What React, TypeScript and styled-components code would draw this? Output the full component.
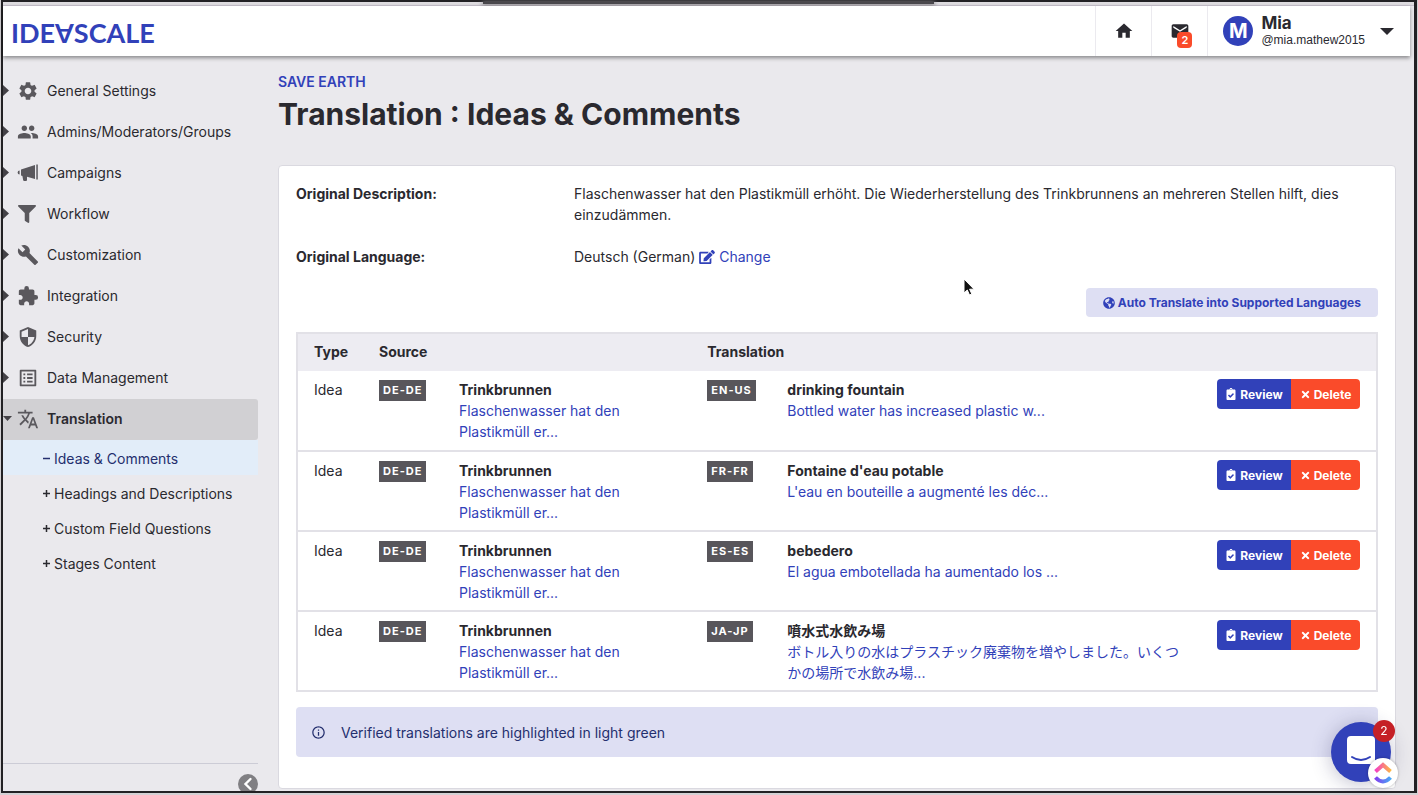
import React from "react";
import styled, { createGlobalStyle, css } from "styled-components";
import {
  MdSettings,
  MdPeople,
  MdBuild,
  MdExtension,
  MdSecurity,
  MdOutlineListAlt,
  MdTranslate,
  MdHome,
  MdEmail,
  MdInfoOutline,
} from "react-icons/md";
import {
  FaFilter,
  FaEdit,
  FaGlobeAmericas,
  FaClipboardCheck,
  FaTimes,
} from "react-icons/fa";

const blue = "#3141b9";
const ink = "#2a292f";
const line = "#e2e1e7";

const GlobalStyle = createGlobalStyle`
  * { box-sizing: border-box; }
  body {
    margin: 0;
    background: #d3d1d4;
    color: ${ink};
    font: 14px/21px Inter, "Noto Sans CJK JP", sans-serif;
  }
  button { font-family: inherit; cursor: pointer; }
  a { text-decoration: none; }
`;

const Frame = styled.div`
  display: flex;
  flex-direction: column;
  min-height: calc(100vh - 3px);
  margin: 0 1px 3px;
  border: 2px solid #222124;
  border-right-width: 3px;
  background: #eae9ed;
`;

const TopEdge = styled.div`
  height: 4px;
  background: #dedce0;
  border-bottom: 1px solid #c9c3ce;
`;

const TopShadow = styled.div`
  width: 32%;
  height: 2px;
  margin-left: 34%;
  background: #4a484d;
  box-shadow: 0 1px 4px 1px #8d8b90;
`;

const Header = styled.header`
  display: flex;
  align-items: center;
  height: 50px;
  margin-right: 4px;
  background: #fff;
  box-shadow: 0 2px 4px rgba(0, 0, 0, 0.42);
  z-index: 1;
`;

const Logo = styled.a`
  margin-right: auto;
  padding: 3px 0 0 8px;
  color: ${blue};
  font: 700 27px/47px Lato, sans-serif;
`;

const FlippedLetter = styled.span`
  display: inline-block;
  padding-bottom: 1px;
  line-height: 20px;
  transform: rotate(180deg);
`;

const HeaderButton = styled.button`
  position: relative;
  display: grid;
  place-items: center;
  width: 56px;
  height: 50px;
  padding: 0;
  border: 0;
  border-left: 1px solid #ebeaef;
  background: none;
  color: ${ink};
`;

const MailCount = styled.span`
  position: absolute;
  top: 26px;
  left: 25px;
  width: 15px;
  height: 16px;
  border-radius: 4px;
  background: #fa4b2a;
  color: #fff;
  font: 600 11px/17px Inter, sans-serif;
  text-align: center;
`;

const Profile = styled.button`
  display: flex;
  align-items: center;
  gap: 8px;
  height: 50px;
  padding: 0 16px 0 15px;
  border: 0;
  border-left: 1px solid #ebeaef;
  background: none;
  color: ${ink};
  text-align: left;
`;

const Avatar = styled.span`
  width: 30px;
  height: 30px;
  border-radius: 50%;
  background: ${blue};
  color: #fff;
  font: 700 20px/30px Inter, sans-serif;
  text-align: center;
`;

const UserName = styled.strong`
  display: block;
  font: 700 17px/19px Inter, sans-serif;
`;

const UserHandle = styled.span`
  display: block;
  font: 12px/15px "Liberation Sans", sans-serif;
`;

const Caret = styled.svg`
  width: 14px;
  height: 7px;
  margin-left: 7px;
`;

const Body = styled.div`
  display: flex;
  flex: 1;
`;

const Sidebar = styled.nav`
  display: flex;
  flex-direction: column;
  flex: none;
  width: 255px;
  padding-top: 15px;
`;

const NavList = styled.ul`
  margin: 0;
  padding: 0;
  list-style: none;
`;

const NavLink = styled.a<{ $open?: boolean }>`
  display: flex;
  align-items: center;
  height: 41px;
  padding-bottom: 2px;
  border-radius: 0 3px 3px 0;
  color: ${ink};
  font-size: 14px;
  ${(p) =>
    p.$open &&
    css`
      background: #d1d0d3;
      font-weight: 600;
    `}
`;

const Arrow = styled.svg`
  flex: none;
  width: 10px;
  height: 12px;
  margin-right: 4px;
  color: #444247;
`;

const NavIcon = styled.span`
  display: grid;
  place-items: center;
  width: 20px;
  margin-right: 10px;
  color: #5a585d;
  font-size: 22px;
`;

const SubLink = styled.a<{ $current?: boolean }>`
  display: flex;
  align-items: center;
  gap: 3px;
  height: 35px;
  padding: 2px 0 0 39px;
  color: ${(p) => (p.$current ? "#242f6e" : ink)};
  background: ${(p) => (p.$current ? "#e2edf9" : "none")};
`;

const SidebarFoot = styled.div`
  display: flex;
  justify-content: flex-end;
  height: 28px;
  margin-top: auto;
  padding-top: 10px;
  border-top: 1px solid #ccccd6;
  overflow: hidden;
`;

const Collapse = styled.button`
  width: 20px;
  height: 20px;
  padding: 0;
  border: 0;
  border-radius: 50%;
  background: #807f83;
  color: #fff;
`;

const Main = styled.main`
  flex: 1;
  min-width: 0;
  padding: 15px 18px 2px 20px;
`;

const Community = styled.a`
  display: block;
  color: ${blue};
  font-size: 14px;
  font-weight: 600;
`;

const Title = styled.h1`
  margin: 3px 0 32px;
  font: 700 30px/38px Inter, sans-serif;
`;

const Card = styled.section`
  padding: 17px 17px 31px;
  border: 1px solid #dad9e0;
  border-radius: 4px;
  background: #fff;
`;

const Details = styled.dl`
  display: grid;
  grid-template-columns: 278px 1fr;
  row-gap: 21px;
  margin: 0;
`;

const Term = styled.dt`
  font-weight: 700;
`;

const Detail = styled.dd`
  margin: 0;
`;

const ChangeLink = styled.a`
  color: ${blue};
  svg { width: 16px; height: 14px; margin-right: 4px; vertical-align: -2px; }
`;

const Toolbar = styled.div`
  display: flex;
  justify-content: flex-end;
  margin: 21px 0 15px;
`;

const AutoButton = styled.button`
  display: flex;
  align-items: center;
  gap: 3px;
  height: 29px;
  padding: 0 17px;
  border: 0;
  border-radius: 4px;
  background: #dedff3;
  color: ${blue};
  font-size: 12px;
  font-weight: 700;
`;

const Table = styled.table`
  width: 100%;
  table-layout: fixed;
  border-collapse: collapse;
  border: 2px solid ${line};
`;

const Head = styled.th`
  height: 38px;
  padding: 0 16px 2px;
  background: #edecf2;
  font-weight: 700;
  text-align: left;
`;

const Row = styled.tr`
  height: 80px;
  & + & { border-top: 2px solid ${line}; }
`;

const Cell = styled.td`
  padding: 8px 16px 7px;
  vertical-align: top;
`;

const Entry = styled.div`
  display: grid;
  grid-template-columns: 80px 1fr;
  align-items: start;
`;

const LangTag = styled.span`
  justify-self: start;
  margin-top: 1px;
  padding: 0 4px;
  background: #58565b;
  color: #fff;
  font-size: 11px;
  font-weight: 700;
  letter-spacing: 1px;
`;

const EntryTitle = styled.strong`
  display: block;
  font-weight: 700;
`;

const EntryLink = styled.a`
  color: ${blue};
`;

const Actions = styled.div`
  display: flex;
  justify-content: flex-end;
`;

const Action = styled.button<{ $danger?: boolean }>`
  display: flex;
  align-items: center;
  justify-content: center;
  gap: 3px;
  width: ${(p) => (p.$danger ? 69 : 74)}px;
  height: 30px;
  padding: 0;
  border: 0;
  border-radius: ${(p) => (p.$danger ? "0 4px 4px 0" : "4px 0 0 4px")};
  background: ${(p) => (p.$danger ? "#fa4b2a" : blue)};
  color: #fff;
  font-size: 12px;
  font-weight: 700;
`;

const Notice = styled.p`
  display: flex;
  align-items: center;
  gap: 15px;
  height: 50px;
  margin: 15px 0 0;
  padding: 0 15px;
  border-radius: 4px;
  background: #dedff3;
  color: #242f6e;
`;

const Pointer = styled.svg`
  position: absolute;
  top: 277px;
  left: 962px;
  width: 13px;
  height: 20px;
`;

const Chat = styled.button`
  position: fixed;
  right: 27px;
  bottom: 13px;
  width: 60px;
  height: 60px;
  padding: 0;
  border: 0;
  border-radius: 50%;
  background: ${blue};
  box-shadow: 0 2px 20px rgba(40, 40, 90, 0.3);
  z-index: 2;
`;

const ChatCount = styled.span`
  position: absolute;
  top: -2px;
  right: -4px;
  width: 22px;
  height: 22px;
  border-radius: 50%;
  background: #c52026;
  color: #fff;
  font: 12px/22px Inter, sans-serif;
`;

const Recorder = styled.span`
  position: absolute;
  right: -7px;
  bottom: -6px;
  width: 30px;
  height: 30px;
  border-radius: 50%;
  background: #fff;
  box-shadow: 0 0 3px rgba(0, 0, 0, 0.3);
`;

const Megaphone = () => (
  <svg width="22" height="18" viewBox="0 0 22 18" fill="currentColor" aria-hidden="true">
    <path d="M4 5.5 18 1v14L10 12.8V16a1 1 0 0 1-1 1H7.200a1 1 0 0 1-1-.8L5.400 12 4 11.500z" />
    <path d="M2.600 6.500v4A2 2 0 0 1 .6 8.500a2 2 0 0 1 2-2z" />
    <path d="M19.300.5h1.500v15h-1.500z" />
  </svg>
);

const sections = [
  { label: "General Settings", icon: <MdSettings /> },
  { label: "Admins/Moderators/Groups", icon: <MdPeople /> },
  { label: "Campaigns", icon: <Megaphone /> },
  { label: "Workflow", icon: <FaFilter size={18} /> },
  { label: "Customization", icon: <MdBuild /> },
  { label: "Integration", icon: <MdExtension /> },
  { label: "Security", icon: <MdSecurity /> },
  { label: "Data Management", icon: <MdOutlineListAlt /> },
];

const subsections = [
  "Ideas & Comments",
  "Headings and Descriptions",
  "Custom Field Questions",
  "Stages Content",
];

const translations = [
  { lang: "EN-US", title: "drinking fountain", text: "Bottled water has increased plastic w..." },
  { lang: "FR-FR", title: "Fontaine d'eau potable", text: "L'eau en bouteille a augmenté les déc..." },
  { lang: "ES-ES", title: "bebedero", text: "El agua embotellada ha aumentado los ..." },
  {
    lang: "JA-JP",
    title: "噴水式水飲み場",
    text: "ボトル入りの水はプラスチック廃棄物を増やしました。いくつかの場所で水飲み場...",
  },
];

export default function App() {
  return (
    <Frame>
      <GlobalStyle />
      <TopEdge>
        <TopShadow />
      </TopEdge>
      <Header>
        <Logo href="#" aria-label="IdeaScale">
          IDE<FlippedLetter>A</FlippedLetter>SCALE
        </Logo>
        <HeaderButton aria-label="Home">
          <MdHome size={20} />
        </HeaderButton>
        <HeaderButton aria-label="Messages">
          <MdEmail size={20} />
          <MailCount>2</MailCount>
        </HeaderButton>
        <Profile>
          <Avatar>M</Avatar>
          <span>
            <UserName>Mia</UserName>
            <UserHandle>@mia.mathew2015</UserHandle>
          </span>
          <Caret viewBox="0 0 14 7" aria-hidden="true">
            <path d="M0 0h14L7 7z" fill={ink} />
          </Caret>
        </Profile>
      </Header>

      <Body>
        <Sidebar>
          <NavList>
            {sections.map((s) => (
              <li key={s.label}>
                <NavLink href="#">
                  <Arrow viewBox="0 0 10 12" aria-hidden="true">
                    <path d="M0 0v11l6-5.500z" fill="currentColor" />
                  </Arrow>
                  <NavIcon>{s.icon}</NavIcon>
                  {s.label}
                </NavLink>
              </li>
            ))}
            <li>
              <NavLink href="#" $open>
                <Arrow viewBox="0 0 10 12" aria-hidden="true">
                  <path d="M0 3h9L4.500 8z" fill="currentColor" />
                </Arrow>
                <NavIcon>
                  <MdTranslate />
                </NavIcon>
                Translation
              </NavLink>
              <NavList>
                {subsections.map((label, i) => (
                  <li key={label}>
                    <SubLink href="#" $current={i === 0}>
                      <svg width="9" height="9" viewBox="0 0 9 9" stroke="currentColor" strokeWidth="1.500" aria-hidden="true">
                        <path d={i === 0 ? "M1 4.500h7" : "M1 4.500h7M4.500 1v7"} />
                      </svg>
                      {label}
                    </SubLink>
                  </li>
                ))}
              </NavList>
            </li>
          </NavList>
          <SidebarFoot>
            <Collapse aria-label="Collapse menu">
              <svg width="20" height="20" viewBox="0 0 20 20" fill="none" aria-hidden="true">
                <path d="m12.500 5-5 5 5 5" stroke="#fff" strokeWidth="2.400" strokeLinecap="round" />
              </svg>
            </Collapse>
          </SidebarFoot>
        </Sidebar>

        <Main>
          <Community href="#">SAVE EARTH</Community>
          <Title>Translation : Ideas &amp; Comments</Title>
          <Card>
            <Details>
              <Term>Original Description:</Term>
              <Detail>
                Flaschenwasser hat den Plastikmüll erhöht. Die Wiederherstellung des Trinkbrunnens an
                mehreren Stellen hilft, dies einzudämmen.
              </Detail>
              <Term>Original Language:</Term>
              <Detail>
                Deutsch (German){" "}
                <ChangeLink href="#">
                  <FaEdit aria-hidden="true" />
                  Change
                </ChangeLink>
              </Detail>
            </Details>
            <Toolbar>
              <AutoButton>
                <FaGlobeAmericas size={12} aria-hidden="true" />
                Auto Translate into Supported Languages
              </AutoButton>
            </Toolbar>
            <Table>
              <colgroup>
                <col style={{ width: 66 }} />
                <col style={{ width: "30.4%" }} />
                <col />
                <col style={{ width: 176 }} />
              </colgroup>
              <thead>
                <tr>
                  <Head scope="col">Type</Head>
                  <Head scope="col">Source</Head>
                  <Head scope="col">Translation</Head>
                  <Head scope="col" aria-label="Actions" />
                </tr>
              </thead>
              <tbody>
                {translations.map((t) => (
                  <Row key={t.lang}>
                    <Cell>Idea</Cell>
                    <Cell>
                      <Entry>
                        <LangTag>DE-DE</LangTag>
                        <div>
                          <EntryTitle>Trinkbrunnen</EntryTitle>
                          <EntryLink href="#">Flaschenwasser hat den Plastikmüll er...</EntryLink>
                        </div>
                      </Entry>
                    </Cell>
                    <Cell>
                      <Entry>
                        <LangTag>{t.lang}</LangTag>
                        <div>
                          <EntryTitle>{t.title}</EntryTitle>
                          <EntryLink href="#">{t.text}</EntryLink>
                        </div>
                      </Entry>
                    </Cell>
                    <Cell>
                      <Actions>
                        <Action>
                          <FaClipboardCheck size={12} aria-hidden="true" />
                          Review
                        </Action>
                        <Action $danger>
                          <FaTimes size={11} aria-hidden="true" />
                          Delete
                        </Action>
                      </Actions>
                    </Cell>
                  </Row>
                ))}
              </tbody>
            </Table>
            <Notice>
              <MdInfoOutline size={15} aria-hidden="true" />
              Verified translations are highlighted in light green
            </Notice>
          </Card>
        </Main>
      </Body>

      <Pointer viewBox="0 0 13 20" aria-hidden="true">
        <path
          d="M2 2v14l3.300-3 2.200 5 2.300-1-2.200-4.800H12z"
          fill="#111"
          stroke="#fff"
          strokeWidth="1"
        />
      </Pointer>

      <Chat aria-label="Open chat">
        <svg width="60" height="60" viewBox="0 0 60 60" fill="none" aria-hidden="true">
          <path d="M20 14h20a4 4 0 0 1 4 4v25l-6-1H20a4 4 0 0 1-4-4V18a4 4 0 0 1 4-4z" fill="#fff" />
          <path d="M21 35q9 6 18 0" stroke={blue} strokeWidth="2" strokeLinecap="round" />
        </svg>
        <ChatCount>2</ChatCount>
        <Recorder>
          <svg width="30" height="30" viewBox="0 0 30 30" fill="none" aria-hidden="true">
            <defs>
              <linearGradient id="roof" x1="0" x2="1">
                <stop offset="0" stopColor="#f43fc4" />
                <stop offset="1" stopColor="#fcb545" />
              </linearGradient>
              <linearGradient id="smile" x1="0" x2="1">
                <stop offset="0" stopColor="#8040f0" />
                <stop offset="1" stopColor="#49a8f5" />
              </linearGradient>
            </defs>
            <path d="m7.500 13.500 7.500-6.500 7.500 6.500" stroke="url(#roof)" strokeWidth="4" />
            <path d="M7.500 19.500q7.500 8 15 0" stroke="url(#smile)" strokeWidth="4" />
          </svg>
        </Recorder>
      </Chat>
    </Frame>
  );
}
